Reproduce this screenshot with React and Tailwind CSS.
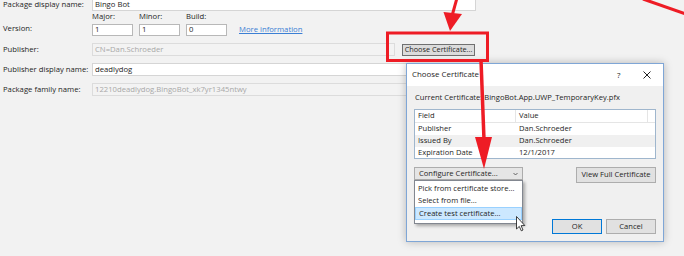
export default function App() {
  return (
    <div className="relative w-[684px] h-[256px] overflow-hidden bg-[#f2f2f2] font-['Open_Sans',sans-serif] text-[7.7px] leading-none text-[#1e1e1e] whitespace-nowrap">
      {/* Main form */}
      <div className="flex flex-col pl-[3px]">
        {/* Package display name */}
        <div className="flex items-end h-[11px]">
          <div className="w-[89px] pb-[2px]">Package display name:</div>
          <div className="w-[384px] h-[11px] bg-white border border-t-0 border-[#d5d5d5] flex items-end pl-[2px] pb-[1px]">Bingo Bot</div>
        </div>
        {/* Version */}
        <div className="flex items-end mt-[2px]">
          <div className="w-[89px] pb-[3px]">Version:</div>
          <div className="flex items-end gap-[6px]">
            <div className="flex flex-col gap-[3px] w-[41px]">
              <div className="h-[8px] flex items-center">Major:</div>
              <div className="h-[12px] bg-white border border-[#b8b8b8] flex items-center pl-[2px]">1</div>
            </div>
            <div className="flex flex-col gap-[3px] w-[41px]">
              <div className="h-[8px] flex items-center">Minor:</div>
              <div className="h-[12px] bg-white border border-[#b8b8b8] flex items-center pl-[2px]">1</div>
            </div>
            <div className="flex flex-col gap-[3px] w-[41px]">
              <div className="h-[8px] flex items-center">Build:</div>
              <div className="h-[12px] bg-white border border-[#b8b8b8] flex items-center pl-[2px]">0</div>
            </div>
            <div className="ml-[6px] pb-[2px] text-[#3b7fd4] underline">More information</div>
          </div>
        </div>
        {/* Publisher */}
        <div className="flex items-center mt-[7px] h-[13px]">
          <div className="w-[89px]">Publisher:</div>
          <div className="w-[303px] h-[13px] bg-[#f3f3f3] border border-[#dcdcdc] flex items-center pl-[2px] text-[#a8a8a8]">CN=Dan.Schroeder</div>
          <div className="ml-[7px] w-[73px] h-[12px] bg-[#dcdcdc] border border-[#707070] flex items-center justify-center text-[7.3px]">Choose Certificate...</div>
        </div>
        {/* Publisher display name */}
        <div className="flex items-center mt-[7px] h-[13px]">
          <div className="w-[89px]">Publisher display name:</div>
          <div className="w-[384px] h-[13px] bg-white border border-[#d5d5d5] flex items-center pl-[2px]">deadlydog</div>
        </div>
        {/* Package family name */}
        <div className="flex items-center mt-[7px] h-[13px]">
          <div className="w-[89px]">Package family name:</div>
          <div className="w-[384px] h-[13px] bg-[#f3f3f3] border border-[#dcdcdc] flex items-center pl-[2px] text-[#a8a8a8]">12210deadlydog.BingoBot_xk7yr1345ntwy</div>
        </div>
      </div>

      {/* Dialog */}
      <div className="absolute left-[406px] top-[63px] w-[258px] h-[179px] border border-[#7fa6d6] bg-[#f0f0f0] shadow-[0_0_8px_rgba(0,0,0,0.25)] flex flex-col text-[7.6px]">
        <div className="h-[22px] shrink-0 bg-white flex items-center pl-[5px] pr-[12px]">
          <div className="flex-1 text-[7.9px]">Choose Certificate</div>
          <div className="w-[26px] text-[8px]">?</div>
          <svg width="8" height="8" viewBox="0 0 8 8">
            <path d="M0.5 0.5L7.5 7.5M7.5 0.5L0.5 7.5" stroke="#222" strokeWidth="1" />
          </svg>
        </div>
        <div className="flex flex-col px-[7px] pt-[8px]">
          <div className="pl-[1px] h-[8px] flex items-center">Current Certificate: BingoBot.App.UWP_TemporaryKey.pfx</div>
          {/* Table */}
          <div className="mt-[7px] h-[50px] bg-white border border-[#9fb6cd] flex flex-col">
            <div className="h-[13px] flex border-b border-[#e5e5e5] bg-white">
              <div className="w-[101px] border-r border-[#e5e5e5] flex items-center pl-[3px]">Field</div>
              <div className="w-[132px] border-r border-[#e5e5e5] flex items-center pl-[3px]">Value</div>
              <div className="flex-1"></div>
            </div>
            <div className="h-[12px] flex items-center bg-white">
              <div className="w-[101px] pl-[3px]">Publisher</div>
              <div className="pl-[3px]">Dan.Schroeder</div>
            </div>
            <div className="h-[12px] flex items-center bg-[#f0f0f0]">
              <div className="w-[101px] pl-[3px]">Issued By</div>
              <div className="pl-[3px]">Dan.Schroeder</div>
            </div>
            <div className="h-[11px] flex items-center bg-white">
              <div className="w-[101px] pl-[3px]">Expiration Date</div>
              <div className="pl-[3px]">12/1/2017</div>
            </div>
          </div>
          {/* Configure row */}
          <div className="mt-[8px] flex items-start justify-between">
            <div className="relative w-[109px] h-[13px] bg-[#e5e5e5] border border-[#acacac] flex items-center pl-[4px] pr-[4px]">
              <div className="flex-1">Configure Certificate...</div>
              <svg width="5" height="4" viewBox="0 0 5 4">
                <path d="M0.5 1L2.5 3L4.5 1" fill="none" stroke="#444" strokeWidth="0.8" />
              </svg>
              {/* Dropdown list */}
              <div className="absolute left-[-1px] top-[12px] w-[109px] h-[44px] bg-white border border-[#828790] shadow-[2px_2px_3px_rgba(0,0,0,0.3)] flex flex-col pt-[1px]">
                <div className="h-[12px] flex items-center pl-[3px] mt-[1px]">Pick from certificate store...</div>
                <div className="h-[12px] flex items-center pl-[3px]">Select from file...</div>
                <div className="h-[13px] flex items-center pl-[3px] bg-[#cce8ff] border border-[#99d1ff]">Create test certificate...</div>
              </div>
            </div>
            <div className="w-[80px] h-[16px] bg-[#e1e1e1] border border-[#adadad] flex items-center justify-center">View Full Certificate</div>
          </div>
          {/* OK / Cancel */}
          <div className="mt-[36px] flex justify-end gap-[4px]">
            <div className="w-[50px] h-[15px] bg-[#e1e1e1] border border-[#0078d7] flex items-center justify-center">OK</div>
            <div className="w-[50px] h-[15px] bg-[#e1e1e1] border border-[#adadad] flex items-center justify-center">Cancel</div>
          </div>
        </div>
      </div>

      {/* Annotations */}
      <svg className="absolute left-0 top-0 pointer-events-none" width="684" height="256" viewBox="0 0 684 256">
        <line x1="457" y1="-2" x2="452" y2="16" stroke="#ee1c25" strokeWidth="3" />
        <polygon points="443.5,12 462,14 450,31" fill="#ee1c25" />
        <rect x="387.5" y="33" width="100" height="27.5" fill="none" stroke="#ee1c25" strokeWidth="3" />
        <line x1="481" y1="60" x2="484" y2="140" stroke="#ee1c25" strokeWidth="3.5" />
        <polygon points="475,137 492,137 484,169" fill="#ee1c25" />
        <line x1="643" y1="-1" x2="686" y2="14" stroke="#ee1c25" strokeWidth="3" />
        {/* cursor */}
        <path d="M516.5 216.5 L516.5 229 L519.3 226.4 L521.3 230.8 L523 230 L521.1 225.7 L524.8 225.5 Z" fill="#fff" stroke="#111" strokeWidth="0.8" strokeLinejoin="round" />
      </svg>
    </div>
  );
}
